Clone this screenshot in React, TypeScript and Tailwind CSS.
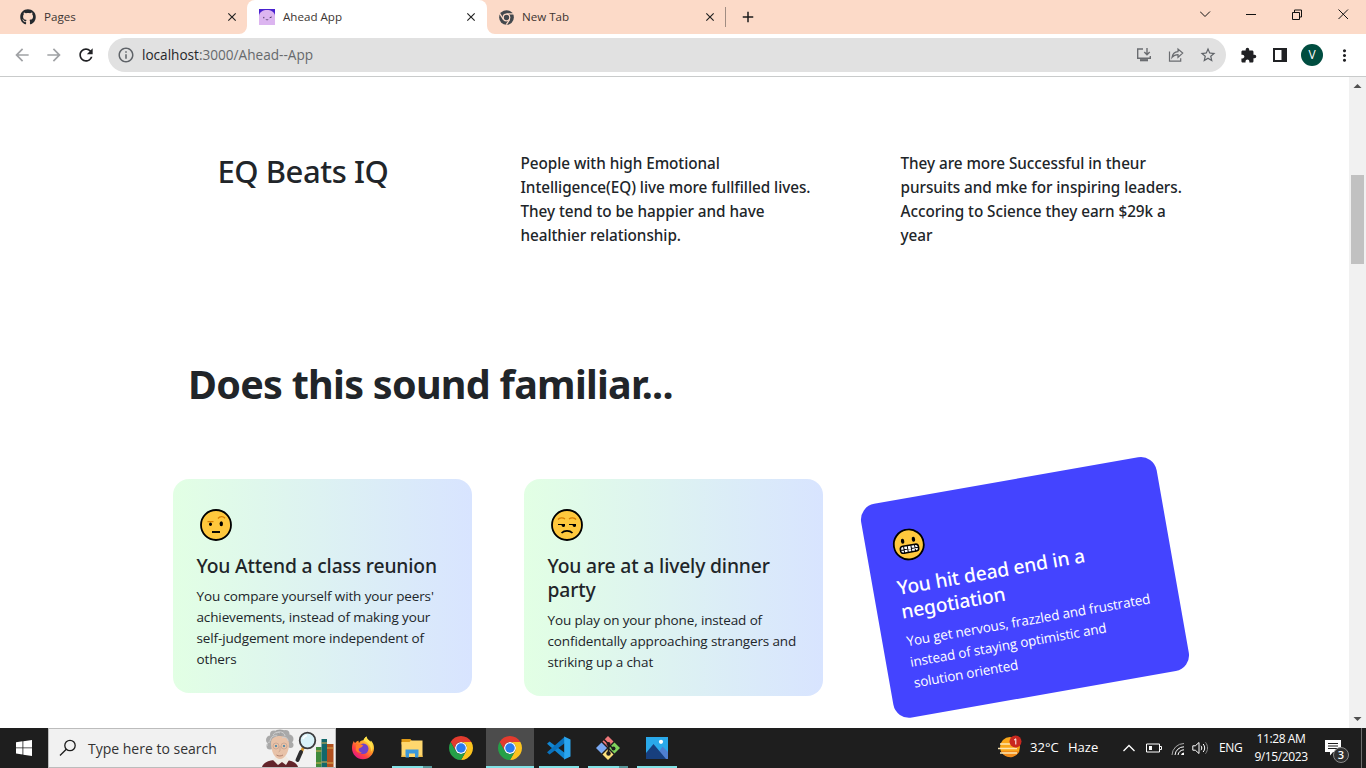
import React from "react";
import { FaGithub } from "react-icons/fa";
import { MdExtension, MdOutlineInfo, MdRefresh, MdArrowBack, MdArrowForward, MdStarBorder, MdMoreVert, MdClose, MdAdd } from "react-icons/md";

const UI = "font-['Open_Sans',sans-serif]";

function ChromeMono() {
  return (
    <svg viewBox="0 0 48 48" className="h-[15px] w-[15px]">
      <circle cx="24" cy="24" r="23.5" fill="#43484d" />
      <circle cx="24" cy="24" r="10.5" fill="none" stroke="#fcdac8" strokeWidth="4" />
      <path d="M24 12.5h22M14 30 3.5 13M34 30 23.5 47" stroke="#fcdac8" strokeWidth="4" />
    </svg>
  );
}

function ChromeLogo() {
  return (
    <svg viewBox="0 0 48 48" className="h-6 w-6">
      <circle cx="24" cy="24" r="12" fill="#fff" />
      <path fill="#e33b2e" d="M24 12h20.78a24 24 0 0 0-41.56 0L13.61 30A12 12 0 0 1 24 12Z" />
      <path fill="#fcc31e" d="M34.39 30 24 48a24 24 0 0 0 20.78-36H24a12 12 0 0 1 10.39 18Z" />
      <path fill="#25a048" d="M13.61 30 3.22 12A24 24 0 0 0 24 48l10.39-18a12 12 0 0 1-20.78 0Z" />
      <circle cx="24" cy="24" r="9.5" fill="#2b7bf0" />
    </svg>
  );
}

function AheadIcon() {
  return (
    <svg viewBox="0 0 16 16" className="h-4 w-4">
      <path d="M0 0h16v16H0z" fill="#4a22cf" />
      <path d="M0 16V6.500C.5 3 4 1 8 1s7.500 2 8 5.500V16z" fill="#dcb5f0" />
      <path d="M4.800 7.900v1.400M10.700 8.700l2-.7" stroke="#4a3560" strokeWidth="1" />
      <path d="M7 10.300c.6.9 1.500.9 2.100 0" stroke="#4a3560" fill="none" strokeWidth=".9" />
    </svg>
  );
}

function Tab({ icon, title, width, active }: { icon: React.ReactNode; title: string; width: string; active?: boolean }) {
  return (
    <div className={`flex h-[34px] shrink-0 items-center ${width} ${active ? "relative rounded-t-lg bg-white pr-[9px]" : "pr-2"}`}>
      {active && (
        <>
          <svg className="absolute bottom-0 -left-2 h-2 w-2" viewBox="0 0 8 8"><path d="M8 0v8H0a8 8 0 0 0 8-8" fill="#fff" /></svg>
          <svg className="absolute -right-2 bottom-0 h-2 w-2" viewBox="0 0 8 8"><path d="M0 0v8h8a8 8 0 0 1-8-8" fill="#fff" /></svg>
        </>
      )}
      <span className="flex w-4 shrink-0 justify-center">{icon}</span>
      <span className="ml-2 flex-1 text-[11.6px] text-[#3c3532]">{title}</span>
      <MdClose className="h-[14px] w-[14px] text-[#222]" />
    </div>
  );
}

function TabStrip() {
  return (
    <div className="flex h-[34px] shrink-0 items-center bg-[#fcdac8]">
      <Tab width="w-[239px] ml-2 pl-3" icon={<FaGithub className="h-4 w-4 text-[#24292e]" />} title="Pages" />
      <Tab active width="w-[240px] pl-3" icon={<AheadIcon />} title="Ahead App" />
      <Tab width="w-[238px] pl-[11px]" icon={<ChromeMono />} title="New Tab" />
      <div className="h-5 w-px bg-[#a08c82]" />
      <MdAdd className="ml-[13px] h-[18px] w-[18px] text-[#1b1b1b]" />
      <svg className="mb-[6px] ml-auto h-4 w-[166px]" viewBox="0 0 166 16" fill="none" stroke="#111" strokeWidth="1">
        <path d="m0 5.500 5 5 5-5" />
        <path d="M46 8.500h10" />
        <path d="M92.500 6.500h7v7h-7zM94.500 6v-2h7v7h-2" />
        <path d="m138.500 3.500 9.500 9.500m0-9.500-9.500 9.500" />
      </svg>
    </div>
  );
}

function Toolbar() {
  return (
    <div className="flex h-[43px] shrink-0 items-center border-b border-[#c9cbcb] bg-white">
      <MdArrowBack className="ml-3 h-5 w-5 text-[#a0a2a5]" />
      <MdArrowForward className="ml-3 h-5 w-5 text-[#a0a2a5]" />
      <MdRefresh className="ml-3 h-5 w-5 text-[#202124]" />
      <div className="ml-3 flex h-[34px] w-[1118px] items-center rounded-full bg-[#e1e1e1] pl-[9px]">
        <MdOutlineInfo className="h-[18px] w-[18px] text-[#5f6368]" />
        <div className="ml-[7px] flex-1 text-[13.6px] text-[#66696c]"><span className="text-[#25272a]">localhost</span>:3000/Ahead--App</div>
        <svg viewBox="0 0 16 16" className="h-4 w-4" fill="none" stroke="#6a6c70" strokeWidth="1.400">
          <path d="M7 2H1.700v9.300h12.600V9M11 1v6.500M8.300 5 11 7.700 13.700 5" />
          <path d="M4 13.200h8" strokeWidth="2.200" />
        </svg>
        <svg viewBox="0 0 16 16" className="ml-4 h-4 w-4" fill="none" stroke="#6a6c70" strokeWidth="1.200">
          <path d="M1.500 4.500v9.700h11.200v-3" />
          <path d="M10 2v2.600C6.500 4.900 4.500 7 4 10.500 5.500 8.600 7.400 7.700 10 7.700v2.600l4.700-4.200z" />
        </svg>
        <MdStarBorder className="mr-[9px] ml-[15px] h-[18px] w-[18px] text-[#5f6368]" />
      </div>
      <MdExtension className="ml-[13.5px] h-[17px] w-[17px] text-[#202124]" />
      <svg viewBox="0 0 14 14" className="ml-[16.5px] h-[14px] w-[14px]"><path d="M0 0h14v14H0zM2 2v10h6.500V2z" fill="#202124" fillRule="evenodd" /></svg>
      <div className="ml-[14px] flex h-[22px] w-[22px] items-center justify-center rounded-full bg-[#004d40] text-[12px] text-white">V</div>
      <MdMoreVert className="ml-3 h-[19px] w-[19px] text-[#202124]" />
    </div>
  );
}

function Face({ kind }: { kind: "raised" | "unamused" | "grimace" }) {
  return (
    <svg viewBox="0 0 32 32" className="ml-[3px] h-8 w-8" fill="none">
      <circle cx="16" cy="16" r="15" fill="#ffc83d" stroke="#000" strokeWidth="1.800" />
      {kind === "raised" && (
        <>
          <path d="M7.500 12.700h6M18 9.500c1.800-2.300 5-2.500 7-.3" stroke="#d67d00" strokeWidth="1.300" />
          <ellipse cx="10.500" cy="15.300" rx="1.500" ry="1.700" fill="#000" />
          <ellipse cx="21.300" cy="14.700" rx="1.700" ry="2.500" fill="#000" />
          <path d="M12 23h8" stroke="#000" strokeWidth="1.900" />
        </>
      )}
      {kind === "unamused" && (
        <>
          <path d="M7 10.500c1.500-2 5-2.200 7-.5M18 10c2-1.700 5.500-1.500 7 .5" stroke="#d67d00" strokeWidth="1.300" />
          <path d="M7 15h7v2.300c-1.500 1.300-3.200.7-3.500-1.300H7zM18 15h7v2.300c-1.500 1.300-3.200.7-3.500-1.300H18z" fill="#000" />
          <path d="M10.500 24c3-2.900 8-2.900 11 0" stroke="#000" strokeWidth="1.700" />
        </>
      )}
      {kind === "grimace" && (
        <>
          <ellipse cx="10.500" cy="11.700" rx="1.700" ry="2.500" fill="#000" />
          <ellipse cx="21.500" cy="11.700" rx="1.700" ry="2.500" fill="#000" />
          <rect x="6.800" y="16.800" width="18.400" height="7" rx="3" fill="#fff" stroke="#000" strokeWidth="1.500" />
          <path d="M7 20.300h18M10.500 17v7M14.200 17v7M17.900 17v7M21.600 17v7" stroke="#000" strokeWidth="1" />
        </>
      )}
    </svg>
  );
}

function Card({ face, title, lines, dark }: { face: "raised" | "unamused" | "grimace"; title: string[]; lines: string[]; dark?: boolean }) {
  return (
    <div className={`w-[299.5px] shrink-0 rounded-2xl px-6 pt-[30px] pb-[23px] whitespace-nowrap ${dark ? "-rotate-10 bg-[#4444ff] text-white" : "bg-linear-to-r from-[#e2ffe4] to-[#d8e4ff] text-[#212529]"}`}>
      <Face kind={face} />
      <h3 className="mt-[13px] font-['Noto_Sans',sans-serif] text-[19.3px] leading-6 font-medium tracking-[-0.15px]">
        {title.map((t) => <div key={t}>{t}</div>)}
      </h3>
      <p className="mt-2 text-[13.5px] leading-[21px] tracking-[-0.13px]">
        {lines.map((t) => <span key={t} className="block">{t}</span>)}
      </p>
    </div>
  );
}

function Paragraph({ lines }: { lines: string[] }) {
  return (
    <p className="w-[380px] font-['Noto_Sans',sans-serif] text-[15.3px] leading-6 font-medium tracking-[-0.05px] whitespace-nowrap">
      {lines.map((t) => <span key={t} className="block">{t}</span>)}
    </p>
  );
}

function Page() {
  return (
    <main className="flex-1 overflow-hidden bg-white text-[#212529]">
      <section className="flex pt-[74px] pl-[217.5px]">
        <h2 className="mt-px w-[303px] font-['Noto_Sans',sans-serif] text-[31px] leading-[39px] font-medium tracking-[-0.45px]">EQ Beats IQ</h2>
        <Paragraph lines={["People with high Emotional", "Intelligence(EQ) live more fullfilled lives.", "They tend to be happier and have", "healthier relationship."]} />
        <Paragraph lines={["They are more Successful in theur", "pursuits and mke for inspiring leaders.", "Accoring to Science they earn $29k a", "year"]} />
      </section>
      <h1 className="mt-[111px] ml-[188px] font-['Noto_Sans',sans-serif] text-[39.5px] leading-[52px] font-bold tracking-[-0.72px] whitespace-nowrap">Does this sound familiar...</h1>
      <section className="mt-[69px] ml-[172.5px] flex items-start gap-[51.5px]">
        <Card face="raised" title={["You Attend a class reunion"]} lines={["You compare yourself with your peers'", "achievements, instead of making your", "self-judgement more independent of", "others"]} />
        <Card face="unamused" title={["You are at a lively dinner", "party"]} lines={["You play on your phone, instead of", "confidentally approaching strangers and", "striking up a chat"]} />
        <Card dark face="grimace" title={["You hit dead end in a", "negotiation"]} lines={["You get nervous, frazzled and frustrated", "instead of staying optimistic and", "solution oriented"]} />
      </section>
    </main>
  );
}

function Scrollbar() {
  return (
    <div className="flex w-[17px] shrink-0 flex-col items-center bg-[#f1f1f1]">
      <svg className="h-[17px] w-[17px]" viewBox="0 0 17 17"><path d="m4.500 11 4-4 4 4z" fill="#505050" /></svg>
      <div className="mt-[81px] h-[89px] w-[13px] bg-[#c1c1c1]" />
      <svg className="mt-auto h-[17px] w-[17px]" viewBox="0 0 17 17"><path d="m4.500 6 4 4 4-4z" fill="#505050" /></svg>
    </div>
  );
}

function Detective() {
  return (
    <svg viewBox="0 0 72 38" className="mr-px h-[38px] w-[72px]">
      <path d="M0 38c1-4 6-6.500 12-7h12c6 .5 11 3 12 7z" fill="#63242a" />
      <path d="m11 31 5 5 4-3 4 3 3-5-3-4H14z" fill="#f0ebe4" />
      <circle cx="18" cy="9" r="8.500" fill="#a2a2a2" />
      <g fill="#a9a9a9">
        <circle cx="8.500" cy="11" r="4.500" /><circle cx="27" cy="10" r="4.500" /><circle cx="8" cy="17" r="3.500" />
        <circle cx="28.500" cy="16" r="3" /><circle cx="12" cy="5.500" r="4" /><circle cx="23.500" cy="5" r="4" />
      </g>
      <path d="M9 14c0-5 4-7 9-7s9 3 9 8c0 8-4 15-9 15s-9-7-9-16z" fill="#e8c2a8" />
      <g fill="none" stroke="#cfcfcf" strokeWidth="1"><path d="M8 12c1-4 3-6 7-5M14 4c4-3 9 0 9 3M20 9c3-2 6 0 6 3M5 17c0-3 1-4 3-4M11 6c2-3 5-3 7-2" /></g>
      <g fill="none" stroke="#c29f8c" strokeWidth=".7"><circle cx="14" cy="17" r="3" /><circle cx="22" cy="17" r="3" /><path d="M18 17v5l-1.500 1" /><path d="M14.500 26c2 1.300 4.500 1.300 6.500 0" stroke="#9a6757" /></g>
      <circle cx="14" cy="17" r="1.100" fill="#3e82a8" /><circle cx="22" cy="17" r="1.100" fill="#3e82a8" />
      <path d="m41.500 18-2.500 6" stroke="#d5972e" strokeWidth="3" />
      <path d="m39 23-3.500 8" stroke="#2d2d2f" strokeWidth="4" strokeLinecap="round" />
      <circle cx="45.500" cy="11.500" r="7.800" fill="#d9f2f8" stroke="#3c3c3e" strokeWidth="1.800" />
      <path d="M41 10a5 5 0 0 1 4-3.500" stroke="#fff" strokeWidth="1.500" fill="none" />
      <path d="M54 18h5.500v20H54z" fill="#3f8a3b" /><path d="M59.500 10h5.500v28h-5.500z" fill="#13686b" /><path d="M65 15h6.500v23H65z" fill="#b1501f" />
      <path d="M54 22h5.500M54 34h5.500M59.500 14H65M59.500 33H65M65 19h6.500M65 34h6.500" stroke="#d9b052" strokeWidth="1" />
    </svg>
  );
}

function Firefox() {
  return (
    <svg viewBox="0 0 24 24" className="h-6 w-6">
      <defs>
        <linearGradient id="ff" x1=".85" y1=".1" x2=".2" y2=".95"><stop offset="0" stopColor="#fff04a" /><stop offset=".4" stopColor="#ff9a25" /><stop offset=".7" stopColor="#ff4440" /><stop offset="1" stopColor="#e31587" /></linearGradient>
      </defs>
      <path d="M2.800 5c.3 1 .8 1.700 1.300 2.100C5 5.800 6.200 5 7.600 4.700c-.2.800 0 1.600.5 2.200.8-1.900 2.400-2.800 4.400-2.700.5-1.500 1.500-2.700 3-3.700.3 2 1.300 3 2.900 4.300l1.200.9.300-1.200c2 2 3.200 4.800 3.100 7.800C22.900 18.500 18 23.300 12 23.300S1 18.500 1 12.300C1 9.500 1.700 7 2.800 5z" fill="url(#ff)" />
      <circle cx="12.300" cy="12.700" r="5.200" fill="#7142c9" />
      <path d="M5 9c3-1.500 5-.8 7.300.4l-1.800 1.800c-1.200.6-2.400.8-2.800 1.800-.4 1.700 1 3.200 3.200 3.200-2 1.200-5.400.4-6.200-2.400z" fill="#ff7c2c" />
      <path d="M12.500 4.200c.5-1.500 1.500-2.700 3-3.700.3 2 1.300 3 2.900 4.300 3.600 3 4 7.500 2 11 .1-4.800-2.600-8.700-7.900-11.600z" fill="#ffe14a" />
    </svg>
  );
}

function Explorer() {
  return (
    <svg viewBox="0 0 24 24" className="h-6 w-6">
      <path d="M1.500 3h9l1.500 2.500v3H1.500z" fill="#e09b17" /><path d="M1.500 6h8l1.500-1.500h11.500V21h-21z" fill="#ffd76e" />
      <path d="M5.500 13.500h13V21.500h-3.500v-4H9v4H5.500z" fill="#3b98dc" /><path d="M1.500 19.500h4V21h-4zM18.500 19.500h4V21h-4z" fill="#f0bb47" />
    </svg>
  );
}

function VsCode() {
  return (
    <svg viewBox="0 0 24 24" className="h-6 w-6">
      <path d="m0 7.800 2.500-2.300L18 17v6.500z" fill="#1186d2" /><path d="m0 16.200 2.500 2.300L18 7V.5z" fill="#0a72bd" />
      <path d="m17.200.4 6.300 3v17.200l-6.300 3z" fill="#2aa5ee" />
    </svg>
  );
}

function GitBash() {
  return (
    <svg viewBox="0 0 24 24" className="h-6 w-6">
      <path d="m12 0 5.500 5.500L12 11 6.500 5.500z" fill="#f0787a" /><path d="m18.500 6.500 5.500 5.500-5.500 5.500L13 12z" fill="#80d35c" />
      <path d="M5.500 6.500 11 12l-5.500 5.500L0 12z" fill="#7aa9f2" /><path d="m12 13 5.500 5.500L12 24l-5.500-5.500z" fill="#fbe07c" />
      <path d="M8 3.500 12.500 8v10M12.500 8.500 17 12.500" stroke="#1d1d1d" strokeWidth="1.600" fill="none" />
      <circle cx="12.500" cy="8" r="2" fill="#1d1d1d" /><circle cx="12.500" cy="17.500" r="2.200" fill="#1d1d1d" /><circle cx="17.500" cy="12.500" r="2" fill="#1d1d1d" />
    </svg>
  );
}

function Photos() {
  return (
    <svg viewBox="0 0 22 22" className="h-[22px] w-[22px]">
      <path d="M0 0h22v22H0z" fill="#2aa9ea" /><path d="M8 22 16.500 9.500 22 15v7z" fill="#4f7fd0" />
      <path d="M0 16 7.500 7 20 22H0z" fill="#173f7e" /><circle cx="15" cy="4.800" r="2.100" fill="#fff" />
    </svg>
  );
}

function Task({ children, state = "none" }: { children: React.ReactNode; state?: "none" | "open" | "multi" | "active" }) {
  return (
    <div className={`flex h-10 w-12 flex-col items-center ${state === "active" ? "bg-[#4c4c4c]" : ""}`}>
      <div className="flex h-[38px] w-full items-center justify-center pt-[2px]">{children}</div>
      {state === "active" && <div className="h-[2px] w-12 bg-[#82e2e6]" />}
      {state === "open" && <div className="h-[2px] w-10 bg-[#82e2e6]" />}
      {state === "multi" && <div className="flex h-[2px] w-10"><div className="w-[31px] bg-[#82e2e6]" /><div className="flex-1 bg-[#569699]" /></div>}
    </div>
  );
}

function Taskbar() {
  return (
    <div className="flex h-10 shrink-0 items-center bg-[#1e1e1e] text-white">
      <div className="flex w-12 justify-center">
        <svg viewBox="0 0 16 16" className="h-4 w-4" fill="#fff"><path d="M0 2.200 6.500 1.300v6.200H0zM7.300 1.200 16 0v7.500H7.300zM0 8.300h6.500v6.200L0 13.600zM7.300 8.300H16V16l-8.700-1.200z" /></svg>
      </div>
      <div className="flex h-10 w-[288px] items-end border border-[#bcbcbc] bg-[#f1f1f1]">
        <svg viewBox="0 0 18 18" className="mb-[10px] ml-[10px] h-[18px] w-[18px]" fill="none" stroke="#1c1c1c" strokeWidth="1.300"><circle cx="11" cy="6.500" r="5.200" /><path d="M7.300 10.200 1 16.500" /></svg>
        <span className="mb-[8px] ml-[11px] flex-1 text-[14px] leading-5 text-[#333]">Type here to search</span>
        <Detective />
      </div>
      <div className="ml-[3px] flex gap-px">
        <Task><Firefox /></Task>
        <Task state="multi"><Explorer /></Task>
        <Task><ChromeLogo /></Task>
        <Task state="active"><ChromeLogo /></Task>
        <Task state="open"><VsCode /></Task>
        <Task state="multi"><GitBash /></Task>
        <Task state="open"><Photos /></Task>
      </div>
      <svg viewBox="0 0 25 24" className="mb-[5px] ml-[316px] h-6 w-[25px]">
        <circle cx="13" cy="13" r="10" fill="#f9a61a" /><path d="M4 17h18.500a10 10 0 0 1-16 3.500z" fill="#f08a1a" />
        <path d="M3 10h13M1 14.500h19M3 19h17" stroke="#fde6b0" strokeWidth="1.600" />
        <circle cx="18.500" cy="7.500" r="6" fill="#c9281f" />
        <path d="m17 6.200 1.800-1.400v5.700" stroke="#fff" strokeWidth="1" fill="none" />
      </svg>
      <span className="ml-[8px] w-[38px] text-[13px] tracking-[0.05px]">32°C</span>
      <span className="w-[55px] text-[13px]">Haze</span>
      <svg viewBox="0 0 12 8" className="h-2 w-3" fill="none" stroke="#fff" strokeWidth="1.300"><path d="m.5 7 5.500-5.500L11.500 7" /></svg>
      <svg viewBox="0 0 16 10" className="ml-[11px] h-[10px] w-4" fill="none" stroke="#fff"><path d="M.5 1h13v8H.5zM14 3.500h1.500v3H14" /><path d="M3 3h3v4H3z" fill="#fff" stroke="none" /></svg>
      <svg viewBox="0 0 14 14" className="mt-[2px] ml-[9px] h-[14px] w-[14px]" fill="none">
        <path d="M1 13A12 12 0 0 1 13 1.500" stroke="#aaa" /><path d="M4 13a9 9 0 0 1 9-8.200M7 13a6 6 0 0 1 6-5.200" stroke="#fff" /><path d="M10 13a3 3 0 0 1 3-2.500V13z" fill="#fff" />
      </svg>
      <svg viewBox="0 0 17 14" className="ml-[7px] h-[14px] w-[17px]" fill="none" stroke="#fff"><path d="M.8 4.800h2.500L7 1.500v11L3.300 9.200H.8z" /><path d="M9 4.800c1 1.300 1 3.100 0 4.400M11.200 3c2 2.500 2 5.500 0 8" /><path d="M13.500 1.300c2.700 3.500 2.700 7.900 0 11.400" stroke="#888" /></svg>
      <span className="ml-[10px] w-[34px] text-[12px] tracking-[-0.3px]">ENG</span>
      <div className="flex w-[56px] flex-col items-center text-[12px] leading-[18px] tracking-[-0.4px] whitespace-nowrap"><span>11:28 AM</span><span>9/15/2023</span></div>
      <div className="relative ml-4 h-6 w-6">
        <svg viewBox="0 0 24 24" className="h-6 w-6"><path d="M0 4h16v12H8l-3 3.500V16H0z" fill="#fff" /><path d="M3 7.500h10M3 10h10M3 12.500h10" stroke="#1e1e1e" strokeWidth="1" /></svg>
        <span className="absolute right-0 -bottom-[3px] flex h-4 w-4 items-center justify-center rounded-full border border-[#8a8a8a] bg-[#303030] text-[11px] font-semibold">3</span>
      </div>
      <div className="ml-auto h-full w-[5px] border-l border-[#6e6e6e]" />
    </div>
  );
}

export default function App() {
  return (
    <div className={`flex h-[768px] w-[1366px] flex-col overflow-hidden bg-white ${UI}`}>
      <TabStrip />
      <Toolbar />
      <div className="flex min-h-0 flex-1">
        <Page />
        <Scrollbar />
      </div>
      <Taskbar />
    </div>
  );
}
